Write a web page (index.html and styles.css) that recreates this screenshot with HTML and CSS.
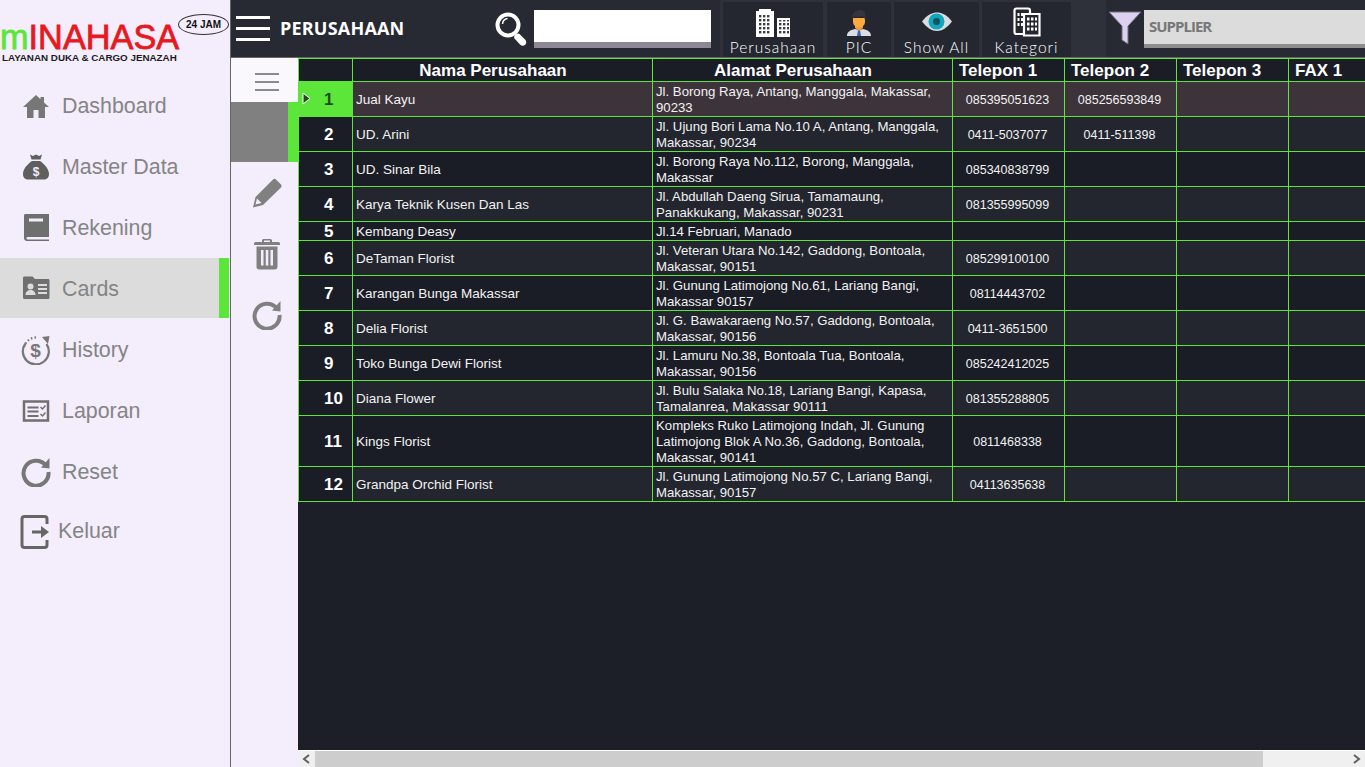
FILE: index.html
```html
<!DOCTYPE html>
<html lang="en">
<head>
    <meta charset="UTF-8">
    <title>mINAHASA - Perusahaan</title>
    <link rel="stylesheet" href="styles.css">
</head>
<body>
    <svg class="defs" width="0" height="0">
        <defs>
            <pattern id="win" width="4" height="4" patternUnits="userSpaceOnUse">
                <rect width="2.4" height="2.4" fill="#3a3d46"/>
            </pattern>
        </defs>
    </svg>
    <aside class="sidebar">
        <div class="logo">
            <div class="logo-name"><span class="logo-m">m</span>INAHASA</div>
            <div class="logo-sub">LAYANAN DUKA &amp; CARGO JENAZAH</div>
            <div class="logo-badge">24 JAM</div>
        </div>
        <nav class="nav">
            <a class="nav-item">
                <svg class="nav-icon" viewBox="0 0 28 28"><path d="M14 3 1 15h4v11h6.500v-8h5v8H23V15h4l-5-4.600V5h-3.500v2.200z" fill="#777"/></svg>
                <span>Dashboard</span>
            </a>
            <a class="nav-item">
                <svg class="nav-icon" viewBox="0 0 28 28"><path d="M8 1.500 11 3 14 1.500 17 3 20 1.500 18.500 6.500h-9zM10 8h8c4 2.500 9 8 9 13 0 4-2.500 5.500-5 5.500H6c-2.500 0-5-1.500-5-5.500 0-5 5-10.500 9-13z" fill="#5f5f5f"/><text x="14" y="22.500" class="bag-sign">$</text></svg>
                <span>Master Data</span>
            </a>
            <a class="nav-item">
                <svg class="nav-icon" viewBox="0 0 28 28"><path d="M3 0h24v23H5.500c-1.400 0-1.400 2.500 0 2.500H27V27H5c-2 0-3-1.500-3-3V2c0-1 .3-2 1-2z" fill="#6f6f6f"/><rect x="7" y="4.500" width="14" height="3" fill="#f4eefc"/></svg>
                <span>Rekening</span>
            </a>
            <a class="nav-item active">
                <svg class="nav-icon" viewBox="0 0 28 28"><path d="M1 4c0-1 .6-1.500 1.500-1.500h8L13 5h13c1 0 1.500.6 1.500 1.500v17c0 1-.6 1.500-1.500 1.500H2.500C1.600 25 1 24.400 1 23.500z" fill="#6f6f6f"/><circle cx="8.500" cy="12.500" r="3" fill="#dcdcdc"/><path d="M3.500 21c0-3.500 2.500-5 5-5s5 1.500 5 5z" fill="#dcdcdc"/><path d="M16 10h9v2h-9zM16 14h9v2h-9zM16 18h9v2h-9z" fill="#dcdcdc"/></svg>
                <span>Cards</span>
            </a>
            <a class="nav-item">
                <svg class="nav-icon nav-icon-wide" viewBox="0 0 30 30"><path d="M25.500 9a13 13 0 1 1-21-.5" fill="none" stroke="#777" stroke-width="2.200"/><path d="M3 12a13 13 0 0 1 14-9.500" fill="none" stroke="#777" stroke-width="2.200" stroke-dasharray="1.500 2.200"/><path d="M21 2l7.500-1-1.500 8z" fill="#777"/><text x="14.500" y="22" class="hist-sign">$</text></svg>
                <span>History</span>
            </a>
            <a class="nav-item">
                <svg class="nav-icon" viewBox="0 0 28 28"><path d="M2 4.500h24v19H2z" fill="none" stroke="#6f6f6f" stroke-width="2.500"/><path d="M5.500 9.500h11v2h-11zM5.500 13.500h11v2h-11zM5.500 18h11v2h-11z" fill="#6f6f6f"/><path d="M18.500 10l2 2 3-3.500M18.500 17l2 2 3-3.500" fill="none" stroke="#6f6f6f" stroke-width="1.500"/></svg>
                <span>Laporan</span>
            </a>
            <a class="nav-item">
                <svg class="nav-icon nav-icon-wide" viewBox="0 0 30 30"><path d="M24.500 8a12.500 12.500 0 1 0 3 7" fill="none" stroke="#777" stroke-width="4"/><path d="M20 10.500 28.500 1v10.500z" fill="#777"/></svg>
                <span>Reset</span>
            </a>
            <a class="nav-item nav-exit">
                <svg class="nav-icon nav-icon-exit" viewBox="0 0 30 36"><path d="M27 10V5c0-1.500-1-2.500-2.500-2.500h-20C3 2.500 2 3.500 2 5v26c0 1.500 1 2.500 2.500 2.500h20c1.500 0 2.500-1 2.500-2.500v-5" fill="none" stroke="#666" stroke-width="3"/><path d="M12 16.500h9V12l8 6-8 6v-4.500h-9z" fill="#666"/></svg>
                <span>Keluar</span>
            </a>
        </nav>
    </aside>

    <main class="main">
        <header class="topbar">
            <div class="burger"><i></i><i></i><i></i></div>
            <h1 class="title">PERUSAHAAN</h1>
            <svg class="search-icon" viewBox="0 0 32 36"><circle cx="13" cy="14" r="10.500" fill="none" stroke="#fff" stroke-width="4"/><path d="M7.500 13a6 6 0 0 1 5-5.500" fill="none" stroke="#fff" stroke-width="1.500"/><path d="M20.500 23.500c1.500-1 3-1.500 4-.5l6 6c1.500 2 .5 4-.5 5-1.500 1-3.500 1-5-.5l-5.500-6c-1-1.500 0-3 1-4z" fill="#fff"/></svg>
            <input class="search-input" type="text">
            <div class="toolbar">
                <div class="tool tool-perusahaan">
                    <svg class="tool-icon" width="36" height="30" viewBox="0 0 36 30"><path d="M1 4h3V2h12v2h3v26H1z" fill="#fff"/><rect x="4" y="7" width="12" height="20" fill="url(#win)"/><path d="M22 11h13v19H22z" fill="#fff"/><rect x="24" y="13" width="10" height="15" fill="url(#win)"/></svg>
                    <span>Perusahaan</span>
                </div>
                <div class="tool tool-pic">
                    <svg class="tool-icon" width="28" height="30" viewBox="0 0 28 30"><path d="M2 29c0-4 3-6 8-7l4 1 4-1c5 1 8 3 8 7z" fill="#d8dde6"/><path d="M13 23h2l1 6h-4z" fill="#3f62b5"/><path d="M10 18h8v3l-4 3-4-3z" fill="#f29a35"/><path d="M8 11h12v4c0 3-3 5.500-6 5.500S8 18 8 15z" fill="#fdaa3e"/><path d="M7.500 13c-1-6 2-10 6.500-9.500 2-1.500 6.500.5 6.500 4.500 0 2 0 3-.5 5-.5-2-1.500-3.500-3-4-3 1-6.500 1-8 .5-.5 1-.8 2-1.500 3.500z" fill="#33363d"/></svg>
                    <span>PIC</span>
                </div>
                <div class="tool tool-show">
                    <svg class="tool-icon" width="32" height="30" viewBox="0 0 32 30"><path d="M1 14.500C6 8 11 5.500 16 5.500S26 8 31 14.500C26 21 21 24 16 24S6 21 1 14.500z" fill="#d9dde0"/><circle cx="15.500" cy="14.500" r="8" fill="#10a6bb"/><circle cx="15.500" cy="14.500" r="3.500" fill="#0d5560"/></svg>
                    <span>Show All</span>
                </div>
                <div class="tool tool-kategori">
                    <svg class="tool-icon" width="28" height="30" viewBox="0 0 28 30"><path d="M1.500 3.500q0-2 2-2H15q2 0 2 2v22q0 1.500-2 1.500H3.500q-2 0-2-2z" fill="none" stroke="#fff" stroke-width="2.200"/><path d="M11 7h15.500v21.500H11z" fill="#24272f" stroke="#fff" stroke-width="2.200"/><path d="M14 10.500h2.500v3H14zM18 10.500h2.500v3H18zM22 10.500h2v3h-2zM14 15.500h2.500v3H14zM18 15.500h2.500v3H18zM22 15.500h2v3h-2zM14 20.500h2.500v3H14zM18 20.500h2.500v3H18zM22 20.500h2v3h-2z" fill="#fff"/><path d="M4.500 6h2v3h-2zM8 6h2v3H8zM4.500 11h2v3h-2zM8 11h2v3H8zM4.500 16h2v3h-2zM8 16h2v3H8z" fill="#fff"/></svg>
                    <span>Kategori</span>
                </div>
            </div>
            <svg class="filter-icon" viewBox="0 0 34 34"><path d="M1 1h32L20 15v18l-6-4V15z" fill="#dcd0f0" stroke="#6e6a78"/></svg>
            <div class="supplier">SUPPLIER</div>
        </header>

        <div class="content">
            <div class="rail">
                <div class="rail-burger"><i></i><i></i><i></i></div>
                <div class="rail-active"></div>
                <div class="rail-btn">
                    <svg width="30" height="30" viewBox="0 0 30 30"><path d="M21 1.500c1-1 2-1 3 0l5 5c.8 1 .8 2 0 3L11 27 1 29.500 3.500 19zM5 20.500l-1.500 6 6-1.500z" fill="#808080" fill-rule="evenodd"/></svg>
                </div>
                <div class="rail-btn">
                    <svg width="28" height="32" viewBox="0 0 28 32"><path d="M1 5.500C1 4.500 2 4 3 4h6V2.500C9 1.500 10 1 11 1h6c1 0 2 .5 2 1.500V4h6c1 0 2 .5 2 1.500V7H1zM11 2.500V4h6V2.500z" fill="#808080" fill-rule="evenodd"/><path d="M3.500 8.500h21V29c0 1.500-1 2.500-2.500 2.500H6C4.500 31.500 3.500 30.500 3.500 29z" fill="#808080"/><path d="M8 12h2.500v15.500H8zM12.800 12h2.500v15.500h-2.500zM17.500 12H20v15.500h-2.500z" fill="#f4eefc"/></svg>
                </div>
                <div class="rail-btn">
                    <svg width="30" height="30" viewBox="0 0 30 30"><path d="M24.500 8a12.500 12.500 0 1 0 3 7" fill="none" stroke="#808080" stroke-width="4"/><path d="M20 10.500 28.500 1v10.500z" fill="#808080"/></svg>
                </div>
            </div>

            <div class="grid-wrap">
                <div class="grid-view">
                    <table class="grid">
                        <colgroup>
                            <col class="col-no"><col class="col-text"><col class="col-text">
                            <col class="col-tel"><col class="col-tel"><col class="col-tel"><col class="col-tel">
                        </colgroup>
                        <thead>
                            <tr>
                                <th></th>
                                <th>Nama Perusahaan</th>
                                <th>Alamat Perusahaan</th>
                                <th class="th-left">Telepon 1</th>
                                <th class="th-left">Telepon 2</th>
                                <th class="th-left">Telepon 3</th>
                                <th class="th-left">FAX 1</th>
                            </tr>
                        </thead>
                        <tbody>
                            <tr class="selected">
                                <td class="no">1<svg class="row-arrow" width="9" height="13" viewBox="0 0 9 13"><path d="M1 1l7 5.500L1 12z" fill="#1f4d1a" stroke="#fff"/></svg></td>
                                <td>Jual Kayu</td>
                                <td class="addr">Jl. Borong Raya, Antang, Manggala, Makassar, 90233</td>
                                <td class="tel">085395051623</td><td class="tel">085256593849</td><td></td><td></td>
                            </tr>
                            <tr>
                                <td class="no">2</td>
                                <td>UD. Arini</td>
                                <td class="addr">Jl. Ujung Bori Lama No.10 A, Antang, Manggala, Makassar, 90234</td>
                                <td class="tel">0411-5037077</td><td class="tel">0411-511398</td><td></td><td></td>
                            </tr>
                            <tr>
                                <td class="no">3</td>
                                <td>UD. Sinar Bila</td>
                                <td class="addr">Jl. Borong Raya No.112, Borong, Manggala, Makassar</td>
                                <td class="tel">085340838799</td><td></td><td></td><td></td>
                            </tr>
                            <tr>
                                <td class="no">4</td>
                                <td>Karya Teknik Kusen Dan Las</td>
                                <td class="addr">Jl. Abdullah Daeng Sirua, Tamamaung, Panakkukang, Makassar, 90231</td>
                                <td class="tel">081355995099</td><td></td><td></td><td></td>
                            </tr>
                            <tr class="row-small">
                                <td class="no">5</td>
                                <td>Kembang Deasy</td>
                                <td class="addr">Jl.14 Februari, Manado</td>
                                <td></td><td></td><td></td><td></td>
                            </tr>
                            <tr>
                                <td class="no">6</td>
                                <td>DeTaman Florist</td>
                                <td class="addr">Jl. Veteran Utara No.142, Gaddong, Bontoala, Makassar, 90151</td>
                                <td class="tel">085299100100</td><td></td><td></td><td></td>
                            </tr>
                            <tr>
                                <td class="no">7</td>
                                <td>Karangan Bunga Makassar</td>
                                <td class="addr">Jl. Gunung Latimojong No.61, Lariang Bangi, Makassar 90157</td>
                                <td class="tel">08114443702</td><td></td><td></td><td></td>
                            </tr>
                            <tr>
                                <td class="no">8</td>
                                <td>Delia Florist</td>
                                <td class="addr">Jl. G. Bawakaraeng No.57, Gaddong, Bontoala, Makassar, 90156</td>
                                <td class="tel">0411-3651500</td><td></td><td></td><td></td>
                            </tr>
                            <tr>
                                <td class="no">9</td>
                                <td>Toko Bunga Dewi Florist</td>
                                <td class="addr">Jl. Lamuru No.38, Bontoala Tua, Bontoala, Makassar, 90156</td>
                                <td class="tel">085242412025</td><td></td><td></td><td></td>
                            </tr>
                            <tr>
                                <td class="no">10</td>
                                <td>Diana Flower</td>
                                <td class="addr">Jl. Bulu Salaka No.18, Lariang Bangi, Kapasa, Tamalanrea, Makassar 90111</td>
                                <td class="tel">081355288805</td><td></td><td></td><td></td>
                            </tr>
                            <tr class="row-large">
                                <td class="no">11</td>
                                <td>Kings Florist</td>
                                <td class="addr">Kompleks Ruko Latimojong Indah, Jl. Gunung Latimojong Blok A No.36, Gaddong, Bontoala, Makassar, 90141</td>
                                <td class="tel">0811468338</td><td></td><td></td><td></td>
                            </tr>
                            <tr>
                                <td class="no">12</td>
                                <td>Grandpa Orchid Florist</td>
                                <td class="addr">Jl. Gunung Latimojong No.57 C, Lariang Bangi, Makassar, 90157</td>
                                <td class="tel">04113635638</td><td></td><td></td><td></td>
                            </tr>
                        </tbody>
                    </table>
                </div>
                <div class="hscroll">
                    <svg class="hscroll-arrow" width="17" height="16" viewBox="0 0 17 16"><path d="M11 4 6 8l5 4" fill="none" stroke="#606060" stroke-width="2"/></svg>
                    <div class="hscroll-track"><div class="hscroll-thumb"></div></div>
                    <svg class="hscroll-arrow" width="17" height="16" viewBox="0 0 17 16"><path d="M6 4l5 4-5 4" fill="none" stroke="#606060" stroke-width="2"/></svg>
                </div>
            </div>
        </div>
    </main>
</body>
</html>
```

FILE: styles.css
```css
* {
    box-sizing: border-box;
}
body {
    margin: 0;
    width: 1365px;
    height: 767px;
    overflow: hidden;
    display: flex;
    font-family: "Liberation Sans", Arial, sans-serif;
    background-color: #f4eefc;
}
.defs {
    position: absolute;
}

/* left menu */
.sidebar {
    width: 231px;
    flex: none;
    border-right: 1px solid #666;
    background-color: #f4eefc;
}
.logo {
    height: 75px;
    position: relative;
    padding-top: 22px;
}
.logo-name {
    font-size: 34.3px;
    line-height: 31px;
    color: #e7191f;
    -webkit-text-stroke: 0.8px #e7191f;
    white-space: nowrap;
}
.logo-m {
    color: #5ce63a;
    -webkit-text-stroke: 0.8px #5ce63a;
}
.logo-sub {
    margin-left: 2px;
    font-size: 9.8px;
    line-height: 9px;
    font-weight: bold;
    color: #1c1c1c;
    white-space: nowrap;
}
.logo-badge {
    position: absolute;
    left: 178px;
    top: 14px;
    width: 51px;
    height: 21px;
    border: 1px solid #333;
    border-radius: 50%;
    font-size: 10px;
    font-weight: bold;
    line-height: 19px;
    text-align: center;
    color: #111;
}
.nav-item {
    height: 61px;
    display: flex;
    align-items: center;
    padding-left: 22px;
    font-size: 21.4px;
    color: #848484;
}
.nav-item span {
    padding-top: 2px;
}
.nav-item.active {
    height: 60px;
    margin-right: 1px;
    margin-bottom: 1px;
    background-color: #dcdcdc;
    border-right: 10px solid #5ce63a;
}
.nav-icon {
    width: 28px;
    height: 28px;
    margin-right: 12px;
    flex: none;
}
.nav-icon-wide {
    width: 30px;
    height: 30px;
    margin-left: -1px;
    margin-right: 11px;
}
.nav-icon-exit {
    width: 30px;
    height: 36px;
    margin-left: -2px;
    margin-right: 8px;
}
.nav-exit {
    height: 59px;
}
.nav-exit span {
    padding-top: 0;
}
.bag-sign {
    font: bold 12px "Liberation Sans", sans-serif;
    fill: #f4eefc;
    text-anchor: middle;
}
.hist-sign {
    font: bold 19px "Liberation Sans", sans-serif;
    fill: #777;
    text-anchor: middle;
}

/* top bar */
.main {
    flex: 1;
    min-width: 0;
    display: flex;
    flex-direction: column;
}
.topbar {
    height: 58px;
    flex: none;
    display: flex;
    align-items: center;
    background-color: #272a33;
    border-bottom: 1px solid #666;
}
.burger {
    width: 34px;
    margin-left: 5px;
    flex: none;
}
.burger i {
    display: block;
    height: 3px;
    background-color: #fff;
    margin-bottom: 8px;
}
.burger i:last-child {
    margin-bottom: 0;
}
.title {
    width: 215px;
    flex: none;
    margin: -1px 0 0 10px;
    font-family: "Open Sans", sans-serif;
    font-size: 18px;
    font-weight: 700;
    letter-spacing: 0.2px;
    color: #fff;
}
.search-icon {
    width: 32px;
    height: 36px;
    flex: none;
    margin-right: 7px;
}
.search-input {
    width: 177px;
    height: 38px;
    flex: none;
    margin-top: 1px;
    border: 0;
    border-bottom: 6px solid #8e8894;
    background-color: #fff;
    padding: 0;
}
.toolbar {
    width: 386px;
    height: 57px;
    flex: none;
    margin-left: 9px;
    padding: 2px 0 0 3px;
    display: flex;
    background-color: #2e313a;
}
.tool {
    display: flex;
    flex-direction: column;
    align-items: center;
    background-color: #24272f;
    font-family: "Lato", sans-serif;
    font-size: 15.5px;
    font-weight: 300;
    letter-spacing: 1px;
    color: #fff;
    white-space: nowrap;
    padding-top: 5px;
}
.tool span {
    margin-top: 1px;
    line-height: 18px;
}
.tool-icon {
    flex: none;
}
.tool-perusahaan {
    width: 100px;
    margin-right: 4px;
}
.tool-pic {
    width: 64px;
    margin-right: 3px;
}
.tool-show {
    width: 85px;
    margin-right: 3px;
}
.tool-kategori {
    width: 89px;
}
.filter-icon {
    width: 34px;
    height: 34px;
    flex: none;
    margin: -1px 2px 0;
}
.supplier {
    flex: 1;
    height: 38px;
    margin-top: 1px;
    border-bottom: 4px solid #8e8e8e;
    background-color: #dcdcdc;
    padding-left: 5px;
    font-family: "Open Sans", sans-serif;
    font-size: 15px;
    font-weight: 700;
    letter-spacing: -1px;
    line-height: 33px;
    color: #777;
}

/* tool rail */
.content {
    flex: 1;
    min-height: 0;
    display: flex;
}
.rail {
    width: 67px;
    flex: none;
    background-color: #f4eefc;
}
.rail-burger {
    height: 44px;
    padding: 15px 19px 0 24px;
    background-color: #faf8fd;
}
.rail-burger i {
    display: block;
    height: 2px;
    background-color: #8a8a8a;
    margin-bottom: 6px;
}
.rail-active {
    height: 60px;
    background-color: #808080;
    border-right: 10px solid #5ce63a;
}
.rail-btn {
    height: 61px;
    display: flex;
    align-items: center;
    justify-content: center;
    padding-left: 4px;
}

/* grid */
.grid-wrap {
    flex: 1;
    min-width: 0;
    display: flex;
    flex-direction: column;
    background-color: #1c1f27;
}
.grid-view {
    flex: 1;
    min-height: 0;
    overflow: hidden;
}
.grid {
    table-layout: fixed;
    width: 1102px;
    border-collapse: separate;
    border-spacing: 0;
    border-top: 1px solid #5ce63a;
    border-left: 1px solid #5ce63a;
    color: #f2f2f2;
    font-size: 13.5px;
    line-height: 16px;
}
.col-no {
    width: 54px;
}
.col-text {
    width: 300px;
}
.col-tel {
    width: 112px;
}
.grid th,
.grid td {
    border-right: 1px solid #5ce63a;
    border-bottom: 1px solid #5ce63a;
    padding: 1px 3px 0;
    overflow: hidden;
}
.grid th {
    height: 23px;
    padding-right: 22px;
    background-color: #1b1d26;
    color: #fff;
    font-size: 17px;
    line-height: 20px;
    font-weight: bold;
    text-align: center;
    white-space: nowrap;
}
.grid th.th-left {
    text-align: left;
    padding-left: 6px;
    padding-right: 0;
}
.grid td {
    height: 35px;
    background-color: #1b1d26;
}
.grid td.addr {
    font-size: 13.2px;
}
.grid tbody tr:nth-child(even) td {
    background-color: #23262e;
}
.grid tbody tr.row-small td {
    height: 19px;
    background-color: #1b1d26;
}
.grid tbody tr.row-large td {
    height: 51px;
}
.grid tbody tr.selected td {
    background-color: #3d343b;
}
.grid td.no,
.grid tbody tr:nth-child(even) td.no,
.grid tbody tr.row-small td.no {
    background-color: #1b1d26;
    padding-left: 25px;
    font-size: 17px;
    font-weight: bold;
    color: #fff;
    position: relative;
}
.grid tbody tr.selected td.no {
    background-color: #5ce63a;
    color: #1f4d1a;
    border-right-color: #5ce63a;
}
.grid td.tel {
    text-align: center;
    font-size: 12.5px;
    padding-right: 5px;
}
.row-arrow {
    position: absolute;
    left: 3px;
    top: 10px;
}
.hscroll {
    height: 17px;
    flex: none;
    display: flex;
    align-items: stretch;
    border-top: 1px solid #fff;
    background-color: #f0f0f0;
}
.hscroll-arrow {
    flex: none;
}
.hscroll-track {
    flex: 1;
}
.hscroll-thumb {
    width: 948px;
    height: 100%;
    background-color: #cdcdcd;
}
```
